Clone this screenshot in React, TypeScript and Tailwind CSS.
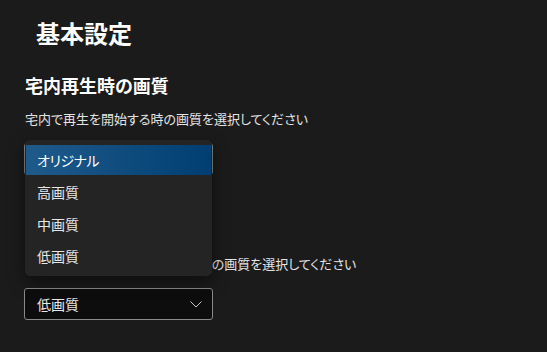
import { useState } from "react";

const options = ["オリジナル", "高画質", "中画質", "低画質"];

function Chevron() {
  return (
    <svg width="12" height="7" viewBox="0 0 12 7" fill="none">
      <path d="M0.5 0.5 L6 6 L11.5 0.5" stroke="#c8c8c8" strokeWidth="1" />
    </svg>
  );
}

export default function App() {
  const [home, setHome] = useState("オリジナル");
  const [remote] = useState("低画質");
  const [open, setOpen] = useState(true);

  return (
    <main className="min-h-screen bg-[#1b1b1b] text-white font-['Noto_Sans_CJK_JP',sans-serif] [font-feature-settings:'palt'] pt-[21px]">
      <h1 className="pl-[36px] text-[24px] leading-[24px] font-bold">基本設定</h1>

      {/* 宅内 */}
      <section className="px-[24px] mt-[31px]">
        <h2 className="pl-px text-[18px] leading-[18px] font-bold">宅内再生時の画質</h2>
        <p className="pl-px mt-[18px] text-[13px] leading-[14px] text-[#e4e4e4]">
          宅内で再生を開始する時の画質を選択してください
        </p>

        <div className="relative mt-[17px] w-[189px]">
          <button
            onClick={() => setOpen(!open)}
            className="w-full h-[32px] flex items-center justify-between pl-[12px] pr-[10px] rounded-[3px] border border-[#8a8a8a] bg-[#0d0d0d] text-[14px] text-[#e8e8e8]"
          >
            {home}
            <Chevron />
          </button>

          {open && (
            <div className="absolute left-px top-[-3px] w-[187px] py-[4px] rounded-[5px] bg-[#242424] shadow-[0_6px_16px_rgba(0,0,0,0.5)] z-10">
              {options.map((o) => (
                <div key={o} className="h-[32px] p-px">
                  <div
                    onClick={() => {
                      setHome(o);
                      setOpen(false);
                    }}
                    className={
                      o === home
                        ? "h-full flex items-center pl-[11px] text-[14px] tracking-[-0.5px] text-white bg-gradient-to-r from-[#1e5b8b] to-[#013e72]"
                        : "h-full flex items-center pl-[11px] text-[14px] text-[#e6e6e6]"
                    }
                  >
                    {o}
                  </div>
                </div>
              ))}
            </div>
          )}
        </div>
      </section>

      {/* 宅外 */}
      <section className="px-[24px] mt-[46px]">
        <h2 className="pl-px text-[18px] leading-[18px] font-bold">宅外再生時の画質</h2>
        <p className="pl-px mt-[18px] text-[13px] leading-[14px] text-[#e4e4e4]">
          モバイル回線で再生を開始する時の画質を選択してください
        </p>

        <div className="mt-[17px] w-[189px]">
          <button className="w-full h-[32px] flex items-center justify-between pl-[12px] pr-[10px] rounded-[3px] border border-[#8a8a8a] bg-[#0d0d0d] text-[14px] text-[#e8e8e8]">
            {remote}
            <Chevron />
          </button>
        </div>
      </section>
    </main>
  );
}
